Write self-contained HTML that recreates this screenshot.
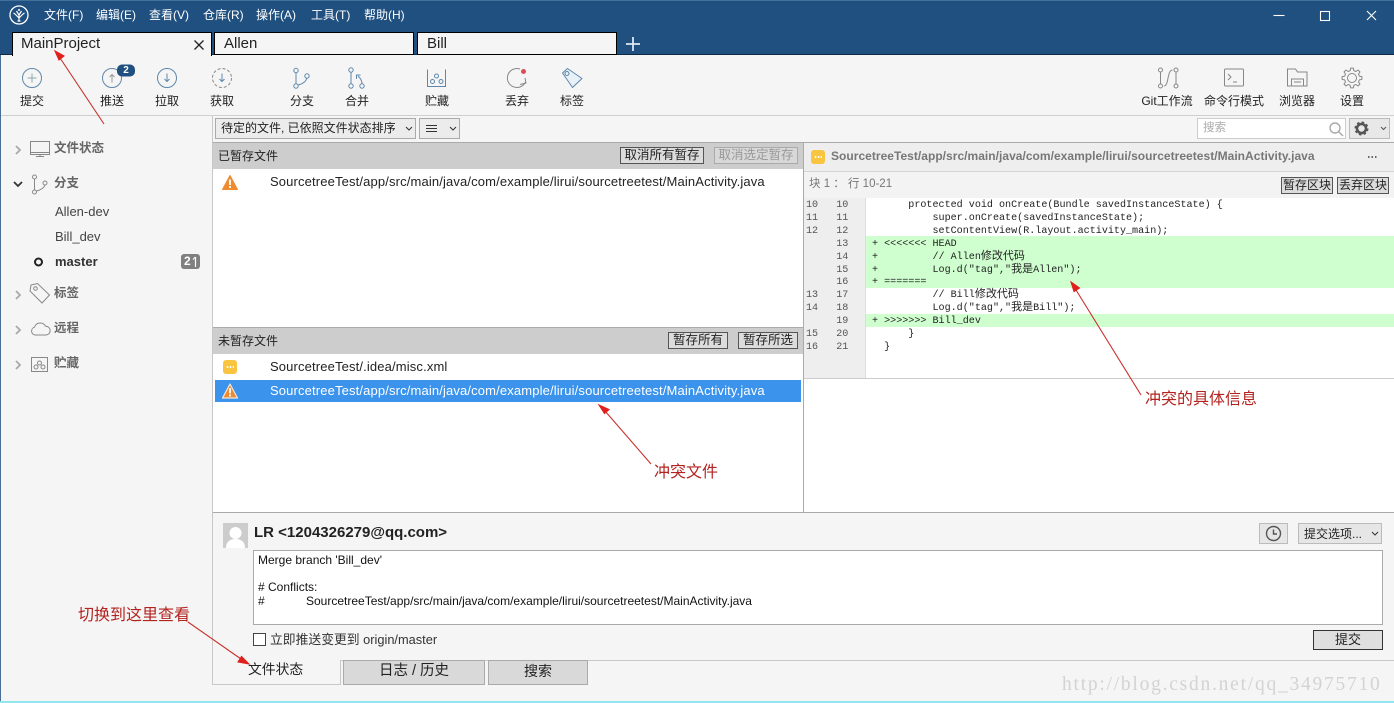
<!DOCTYPE html>
<html><head><meta charset="utf-8">
<style>
html,body{margin:0;padding:0;width:1394px;height:703px;overflow:hidden;background:#f5f5f5;}
body{position:relative;font-family:"Liberation Sans","Noto Sans CJK SC",sans-serif;font-size:12px;color:#222;}
.a{position:absolute;white-space:pre;}
.b{position:absolute;box-sizing:border-box;}
.m{position:absolute;color:#fff;top:7px;line-height:17px;font-size:12px;white-space:pre;}
.t{position:absolute;top:93px;line-height:17px;width:80px;text-align:center;font-size:12px;color:#222;white-space:pre;}
.tab{position:absolute;top:32px;height:23px;background:#f5f5f5;border:1px solid #000;box-sizing:border-box;font-size:15px;line-height:18px;padding:2px 0 0 9px;color:#222;}
.s{position:absolute;left:54px;font-weight:bold;color:#666;font-size:12.5px;line-height:17px;white-space:pre;}
.bn{position:absolute;left:55px;font-size:13px;color:#444;line-height:17px;white-space:pre;}
.h{position:absolute;font-size:12px;line-height:17px;color:#222;white-space:pre;}
.btn{position:absolute;box-sizing:border-box;height:17px;border:1px solid #555;background:#dcdcdc;font-size:12.5px;line-height:15px;text-align:center;color:#222;white-space:pre;}
.p{position:absolute;left:270px;font-size:13px;line-height:17px;color:#222;white-space:pre;letter-spacing:.14px;}
.c{position:absolute;left:872px;font-family:"Liberation Mono","Noto Sans CJK SC",monospace;font-size:10.08px;line-height:13px;color:#222;white-space:pre;}
.c i{font-style:normal;font-size:11px;line-height:0;font-family:"Noto Sans CJK SC",sans-serif;}
.n{position:absolute;font-family:"Liberation Mono",monospace;font-size:10.08px;line-height:13px;color:#555;white-space:pre;}
.r{position:absolute;color:#b3231f;font-size:16px;line-height:20px;white-space:pre;}
svg{position:absolute;overflow:visible;}
</style></head><body>

<!-- title bar -->
<div class="b" style="left:0;top:0;width:1394px;height:55px;background:#205080;border-top:1px solid #44709c;border-bottom:1px solid #0f2a45;"></div>
<svg style="left:9px;top:5px" width="20" height="20" viewBox="0 0 20 20" fill="none" stroke="#fff"><circle cx="10" cy="10" r="9" stroke-width="1.3"/><path d="M10 16V9M10 13L6 9M10 13l4-4M10 10L7.5 6M10 10l2.5-4M6 9L4.5 8M14 9l1.5-1M8.5 16h3" stroke-width="1.2"/><circle cx="10" cy="5" r="1" fill="#fff" stroke="none"/></svg>
<div class="m" style="left:44px">文件(F)</div>
<div class="m" style="left:96px">编辑(E)</div>
<div class="m" style="left:149px">查看(V)</div>
<div class="m" style="left:203px">仓库(R)</div>
<div class="m" style="left:256px">操作(A)</div>
<div class="m" style="left:311px">工具(T)</div>
<div class="m" style="left:364px">帮助(H)</div>
<svg style="left:1270px;top:8px" width="114" height="16" viewBox="0 0 114 16" fill="none" stroke="#fff" stroke-width="1.1"><path d="M3.500 7.500h11"/><rect x="50.5" y="3.500" width="9" height="9"/><path d="M97 3l9 9M106 3l-9 9"/></svg>

<!-- tabs -->
<div class="tab" style="left:12px;width:200px;height:24px;border-bottom:0;padding-left:8px;z-index:1">MainProject</div>
<svg style="left:193px;top:39px;z-index:2" width="12" height="12" fill="none" stroke="#222" stroke-width="1.300"><path d="M1.500 1.500l9 9M10.500 1.500l-9 9"/></svg>
<div class="tab" style="left:214px;width:200px;">Allen</div>
<div class="tab" style="left:417px;width:200px;">Bill</div>
<svg style="left:626px;top:37px" width="14" height="14" fill="none" stroke="#dfe8f2" stroke-width="1.800"><path d="M7 0v14M0 7h14"/></svg>

<!-- toolbar -->
<div class="b" style="left:0;top:55px;width:1394px;height:61px;background:#f5f5f5;border-bottom:1px solid #cfcfcf;"></div>
<svg style="left:0;top:55px" width="1394" height="50" fill="none" stroke="#5f87ab" stroke-width="1">
 <circle cx="32" cy="23" r="9.500"/><path d="M32 18.500v9M27.500 23h9" stroke="#8aa"/>
 <circle cx="112" cy="23" r="9.500"/><path d="M112 27.500v-8M109.500 22l2.500-2.500 2.500 2.500" stroke="#999"/>
 <rect x="117" y="9.500" width="18" height="12" rx="5" fill="#205080" stroke="none"/>
 <circle cx="167" cy="23" r="9.500"/><path d="M167 18.500v8M164.500 24l2.500 2.500 2.500-2.500"/>
 <circle cx="222" cy="23" r="9.500" stroke-dasharray="3 2" stroke="#888"/><path d="M222 18.500v8M219.500 24l2.500 2.500 2.500-2.500"/>
 <circle cx="296" cy="15.500" r="2.200"/><circle cx="296" cy="31" r="2.200"/><circle cx="307" cy="21" r="2.200"/><path d="M296 18v11M298 30c5-1 8-4 9-7"/>
 <circle cx="351" cy="15" r="2.200"/><circle cx="351" cy="31" r="2.200"/><circle cx="362" cy="31" r="2.200"/><path d="M351 17.500v11M362 29c0-4-2-6-4-8M356.500 24v-4h4"/>
 <path d="M427.500 14.500v17h18v-17"/><circle cx="432.500" cy="26.500" r="2"/><circle cx="436.500" cy="21" r="2"/><circle cx="441" cy="26.500" r="2"/>
 <path d="M520 14a9.500 9.500 0 1 0 5.500 13M520 29.500l6-1.500-1-5" stroke="#888"/><circle cx="523.500" cy="16.500" r="2.500" fill="#dd4d55" stroke="none"/>
 <path d="M562.500 18l5-4.500 14.500 10-9.500 9z" fill="#e8f1f8" stroke-linejoin="round"/><circle cx="567" cy="18.500" r="2"/>
 <g stroke="#888"><circle cx="1160.500" cy="15" r="2"/><circle cx="1160.500" cy="31" r="2"/><circle cx="1176" cy="15" r="2"/><circle cx="1176" cy="31" r="2"/><path d="M1160.500 17v12M1176 17v12M1164 31c5 0 3-16 8.500-16"/>
 <rect x="1224.500" y="14" width="19" height="17" rx="1"/><path d="M1228 19l3 3-3 3M1233 27h4"/>
 <path d="M1287.500 31V14h8l2 3h9.500v14zM1291.500 31v-7h12v7M1294 27h7"/>
 <polygon transform="translate(1352 23)" stroke-linejoin="round" points="7.37,1.84 9.9,1.39 9.9,-1.39 7.37,-1.84 6.51,-3.91 7.99,-6.02 6.02,-7.99 3.91,-6.51 1.84,-7.37 1.39,-9.9 -1.39,-9.9 -1.84,-7.37 -3.91,-6.51 -6.02,-7.99 -7.99,-6.02 -6.51,-3.91 -7.37,-1.84 -9.9,-1.39 -9.9,1.39 -7.37,1.84 -6.51,3.91 -7.99,6.02 -6.02,7.99 -3.91,6.51 -1.84,7.37 -1.39,9.9 1.39,9.9 1.84,7.37 3.91,6.51 6.02,7.99 7.99,6.02 6.51,3.91"/><circle cx="1352" cy="23" r="4.500"/></g>
</svg>
<div class="a" style="left:117px;top:63.500px;width:18px;text-align:center;color:#fff;font-weight:bold;font-size:10px;line-height:13px;">2</div>
<div class="t" style="left:-8px">提交</div>
<div class="t" style="left:72px">推送</div>
<div class="t" style="left:127px">拉取</div>
<div class="t" style="left:182px">获取</div>
<div class="t" style="left:262px">分支</div>
<div class="t" style="left:317px">合并</div>
<div class="t" style="left:397px">贮藏</div>
<div class="t" style="left:477px">丢弃</div>
<div class="t" style="left:532px">标签</div>
<div class="t" style="left:1127px">Git工作流</div>
<div class="t" style="left:1194px">命令行模式</div>
<div class="t" style="left:1257px">浏览器</div>
<div class="t" style="left:1312px">设置</div>

<!-- left window edge -->
<div class="b" style="left:0;top:55px;width:1px;height:648px;background:#4a6f94;"></div>

<!-- sidebar -->
<div class="b" style="left:212px;top:116px;width:1px;height:569px;background:#c8c8c8;"></div>
<svg style="left:0;top:130px" width="212" height="250" fill="none" stroke="#888" stroke-width="1">
 <g stroke="#aaa" stroke-width="1.800"><path d="M16 16l4 4-4 4"/><path d="M16 161l4 4-4 4"/><path d="M16 196l4 4-4 4"/><path d="M16 231l4 4-4 4"/></g>
 <path d="M14 52l4 4 4-4" stroke="#333" stroke-width="1.800"/>
 <rect x="30.500" y="11.500" width="19" height="13" /><path d="M30.500 22.500h19M36 26.500h8M40 25v2"/>
 <circle cx="34.500" cy="47" r="2"/><circle cx="34.500" cy="62" r="2"/><circle cx="45" cy="53" r="2"/><path d="M34.500 49v11M36.500 61c5-1 8-4 8.500-6"/>
 <circle cx="38.500" cy="132" r="3.500" stroke="#222" stroke-width="2"/>
 <path d="M31 155l6.500-1.500 12 11.500-7.500 8-12-12z"/><circle cx="35.500" cy="158.500" r="1.800"/>
 <path d="M35 205a4 4 0 0 1-.5-7.800a6 6 0 0 1 11-1a4.400 4.400 0 0 1 .5 8.800z"/>
 <rect x="31.500" y="227.500" width="16" height="14"/><circle cx="36" cy="237" r="2"/><circle cx="39.500" cy="233" r="2"/><circle cx="43" cy="237" r="2"/>
</svg>
<div class="s" style="top:140px">文件状态</div>
<div class="s" style="top:175px">分支</div>
<div class="s" style="top:285px">标签</div>
<div class="s" style="top:320px">远程</div>
<div class="s" style="top:355px">贮藏</div>
<div class="bn" style="top:203px">Allen-dev</div>
<div class="bn" style="top:228px">Bill_dev</div>
<div class="bn" style="top:253px;font-weight:bold;color:#333">master</div>
<div class="b" style="left:181px;top:254px;width:19px;height:15px;background:#808080;border-radius:3px;color:#fff;font-weight:bold;font-size:12px;line-height:15px;padding-left:3px;">2</div>
<svg style="left:192px;top:256px" width="7" height="11" fill="none" stroke="#fff" stroke-width="1.200"><path d="M3.500 11V1M1 3.500L3.500 1"/></svg>

<!-- filter row -->
<div class="b" style="left:215px;top:118px;width:201px;height:21px;background:#ececec;border:1px solid #aaa;font-size:12px;line-height:19px;padding-left:5px;color:#222;white-space:pre;">待定的文件, 已依照文件状态排序</div>
<svg style="left:405px;top:126px" width="8" height="6" fill="none" stroke="#333"><path d="M1 1l3 3 3-3"/></svg>
<div class="b" style="left:419px;top:118px;width:41px;height:21px;background:#ececec;border:1px solid #aaa;"></div>
<svg style="left:426px;top:124px" width="30" height="10" fill="none" stroke="#333"><path d="M0 1.500h11M0 4.500h11M0 7.500h11M24 3l3 3 3-3"/></svg>
<div class="b" style="left:1197px;top:118px;width:149px;height:21px;background:#fff;border:1px solid #ccc;color:#aaa;font-size:11.500px;line-height:19px;padding-left:5px;">搜索</div>
<svg style="left:1328px;top:121px" width="16" height="16" fill="none" stroke="#aaa" stroke-width="1.400"><circle cx="7" cy="7" r="5"/><path d="M10.500 10.500l4.500 4.500"/></svg>
<div class="b" style="left:1349px;top:118px;width:41px;height:21px;background:#e8e8e8;border:1px solid #bbb;"></div>
<svg style="left:1354px;top:121px" width="34" height="15" fill="none"><circle cx="7.500" cy="7.500" r="4.500" stroke="#555" stroke-width="2.500"/><circle cx="7.500" cy="7.500" r="6" stroke="#555" stroke-width="2" stroke-dasharray="2.500 2.200"/><path d="M27 6l2.500 2.500L32 6" stroke="#555"/></svg>

<!-- left panels -->
<div class="b" style="left:213px;top:142px;width:591px;height:371px;background:#fff;"></div>
<div class="b" style="left:213px;top:142px;width:590px;height:27px;background:#cdcdcd;border-top:1px solid #aaa;"></div>
<div class="h" style="left:218px;top:148px">已暂存文件</div>
<div class="btn" style="left:620px;top:147px;width:84px;">取消所有暂存</div>
<div class="btn" style="left:714px;top:147px;width:84px;border-color:#aaa;background:#d8d8d8;color:#999;">取消选定暂存</div>
<svg style="left:222px;top:175px" width="16" height="15"><path d="M8 .5L15.500 14.500H.5z" fill="#ee8a2f" stroke="#ee8a2f" stroke-linejoin="round"/><path d="M8 4.500v5.500M8 11v2" stroke="#fff" stroke-width="1.800"/></svg>
<div class="p" style="top:173px">SourcetreeTest/app/src/main/java/com/example/lirui/sourcetreetest/MainActivity.java</div>

<div class="b" style="left:213px;top:327px;width:590px;height:27px;background:#cdcdcd;border-top:1px solid #aaa;"></div>
<div class="h" style="left:218px;top:333px">未暂存文件</div>
<div class="btn" style="left:668px;top:332px;width:60px;">暂存所有</div>
<div class="btn" style="left:738px;top:332px;width:60px;">暂存所选</div>
<div class="b" style="left:223px;top:360px;width:14px;height:14px;background:#f9c440;border-radius:3px;"></div>
<div class="a" style="left:226px;top:366px;width:8px;height:2px;background:radial-gradient(circle,#fff 1px,transparent 1px) 0 0/3px 2px;"></div>
<div class="p" style="top:358px">SourcetreeTest/.idea/misc.xml</div>
<div class="b" style="left:215px;top:380px;width:586px;height:22px;background:#3b93ec;"></div>
<svg style="left:222px;top:383px" width="16" height="16"><path d="M8 1L15.500 15H.5z" fill="#ee8a2f" stroke="#f6e6d8" stroke-width="1.200" stroke-linejoin="round"/><path d="M8 5v5.500M8 11.500v2" stroke="#fff" stroke-width="1.800"/></svg>
<div class="p" style="top:382px;color:#fff">SourcetreeTest/app/src/main/java/com/example/lirui/sourcetreetest/MainActivity.java</div>

<!-- right panel -->
<div class="b" style="left:803px;top:142px;width:1px;height:371px;background:#aaa;"></div>
<div class="b" style="left:804px;top:142px;width:590px;height:371px;background:#fff;"></div>
<div class="b" style="left:804px;top:142px;width:590px;height:30px;background:#eee;border-top:1px solid #aaa;border-bottom:1px solid #d5d5d5;"></div>
<div class="b" style="left:811px;top:150px;width:14px;height:14px;background:#f9c440;border-radius:3px;"></div>
<div class="a" style="left:814px;top:156px;width:8px;height:2px;background:radial-gradient(circle,#fff 1px,transparent 1px) 0 0/3px 2px;"></div>
<div class="a" style="left:831px;top:148px;font-size:12px;line-height:17px;font-weight:bold;color:#777;letter-spacing:.03px;">SourcetreeTest/app/src/main/java/com/example/lirui/sourcetreetest/MainActivity.java</div>
<div class="a" style="left:1367px;top:156px;width:10px;height:2px;background:radial-gradient(circle,#666 1px,transparent 1px) 0 0/3.500px 2px;"></div>
<div class="b" style="left:804px;top:172px;width:590px;height:26px;background:#f3f3f3;"></div>
<div class="a" style="left:809px;top:176px;color:#777;font-size:11.500px;line-height:17px;">块 1 ： 行 10-21</div>
<div class="btn" style="left:1281px;top:177px;width:52px;font-size:12px;">暂存区块</div>
<div class="btn" style="left:1337px;top:177px;width:52px;font-size:12px;">丢弃区块</div>

<div class="b" style="left:804px;top:198px;width:62px;height:180px;background:#eee;"></div>
<div class="b" style="left:865px;top:198px;width:1px;height:180px;background:#ddd;"></div>
<div class="b" style="left:866px;top:236px;width:528px;height:52px;background:#cfffcf;"></div>
<div class="b" style="left:866px;top:314px;width:528px;height:13px;background:#cfffcf;"></div>
<div class="b" style="left:804px;top:378px;width:590px;height:1px;background:#ccc;"></div>

<div class="n" style="left:806px;top:199px">10   10</div>
<div class="n" style="left:806px;top:212px">11   11</div>
<div class="n" style="left:806px;top:225px">12   12</div>
<div class="n" style="left:806px;top:238px">     13</div>
<div class="n" style="left:806px;top:251px">     14</div>
<div class="n" style="left:806px;top:264px">     15</div>
<div class="n" style="left:806px;top:276px">     16</div>
<div class="n" style="left:806px;top:289px">13   17</div>
<div class="n" style="left:806px;top:302px">14   18</div>
<div class="n" style="left:806px;top:315px">     19</div>
<div class="n" style="left:806px;top:328px">15   20</div>
<div class="n" style="left:806px;top:341px">16   21</div>

<div class="c" style="top:199px">      protected void onCreate(Bundle savedInstanceState) {</div>
<div class="c" style="top:212px">          super.onCreate(savedInstanceState);</div>
<div class="c" style="top:225px">          setContentView(R.layout.activity_main);</div>
<div class="c" style="top:238px">+ &lt;&lt;&lt;&lt;&lt;&lt;&lt; HEAD</div>
<div class="c" style="top:251px">+         // Allen<i>修改代码</i></div>
<div class="c" style="top:264px">+         Log.d("tag","<i>我是</i>Allen");</div>
<div class="c" style="top:276px">+ =======</div>
<div class="c" style="top:289px">          // Bill<i>修改代码</i></div>
<div class="c" style="top:302px">          Log.d("tag","<i>我是</i>Bill");</div>
<div class="c" style="top:315px">+ &gt;&gt;&gt;&gt;&gt;&gt;&gt; Bill_dev</div>
<div class="c" style="top:328px">      }</div>
<div class="c" style="top:341px">  }</div>

<!-- commit area -->
<div class="b" style="left:213px;top:512px;width:1181px;height:1px;background:#aaa;"></div>
<div class="b" style="left:223px;top:523px;width:25px;height:25px;background:#ccc;overflow:hidden;"><svg width="25" height="25"><circle cx="12.500" cy="10" r="6" fill="#fff"/><path d="M3 25c0-7 5-9 9.500-9s9.500 2 9.500 9z" fill="#fff"/></svg></div>
<div class="a" style="left:254px;top:524px;font-size:15px;font-weight:bold;line-height:18px;color:#222;">LR &lt;1204326279@qq.com&gt;</div>
<div class="b" style="left:1259px;top:523px;width:29px;height:21px;background:#e6e6e6;border:1px solid #bbb;"></div>
<svg style="left:1265px;top:525px" width="17" height="17" fill="none" stroke="#555" stroke-width="1.400"><circle cx="8.500" cy="8.500" r="7"/><path d="M8.500 4.500v4.500h3.500"/></svg>
<div class="b" style="left:1298px;top:523px;width:84px;height:21px;background:#e6e6e6;border:1px solid #bbb;font-size:12px;line-height:20px;padding-left:5px;color:#222;white-space:pre;">提交选项...</div>
<svg style="left:1371px;top:531px" width="8" height="6" fill="none" stroke="#333"><path d="M1 1l3 3 3-3"/></svg>
<div class="b" style="left:253px;top:550px;width:1130px;height:75px;background:#fff;border:1px solid #aaa;"></div>
<div class="a" style="left:258px;top:554px;font-size:12px;line-height:13.500px;color:#111;">Merge branch 'Bill_dev'

# Conflicts:
#</div>
<div class="a" style="left:306px;top:594px;font-size:12px;line-height:14px;color:#111;">SourcetreeTest/app/src/main/java/com/example/lirui/sourcetreetest/MainActivity.java</div>
<div class="b" style="left:253px;top:633px;width:13px;height:13px;background:#fff;border:1px solid #444;"></div>
<div class="a" style="left:270px;top:631px;font-size:12.800px;line-height:17px;color:#333;">立即推送变更到 origin/master</div>
<div class="b" style="left:1313px;top:630px;width:70px;height:20px;background:#dfdfdf;border:1px solid #333;font-size:13px;line-height:18px;text-align:center;">提交</div>

<!-- bottom tabs -->
<div class="b" style="left:213px;top:660px;width:1181px;height:1px;background:#c8c8c8;"></div>
<div class="b" style="left:213px;top:684px;width:128px;height:1px;background:#c8c8c8;"></div>
<div class="b" style="left:340px;top:660px;width:1px;height:25px;background:#c8c8c8;"></div>
<div class="b" style="left:213px;top:660px;width:127px;height:24px;background:#f5f5f5;"></div>
<div class="a" style="left:248px;top:661px;font-size:13.800px;line-height:18px;color:#222;">文件状态</div>
<div class="b" style="left:343px;top:660px;width:142px;height:25px;background:#d9d9d9;border:1px solid #aaa;font-size:14.500px;line-height:21px;text-align:center;color:#222;">日志 / 历史</div>
<div class="b" style="left:488px;top:660px;width:100px;height:25px;background:#d9d9d9;border:1px solid #aaa;font-size:14px;line-height:21px;text-align:center;color:#222;">搜索</div>

<!-- watermark -->
<div class="a" style="left:1062px;top:674px;font-family:'Liberation Serif',serif;font-size:19.500px;line-height:22px;letter-spacing:1.760px;color:#d3d3d3;">http://blog.csdn.net/qq_34975710</div>
<div class="b" style="left:0;top:701px;width:1394px;height:2px;background:#8fe8ee;"></div>

<!-- annotations -->
<svg style="left:0;top:0;z-index:3" width="1394" height="703" fill="none" stroke="#c8302a" stroke-width="1.100">
 <path d="M104 124L60 58"/><path d="M55 51l9 5-5 4z" fill="#e0201c" stroke="#e0201c"/>
 <path d="M651 464L605 411"/><path d="M599 405l10 4.500-4.500 4z" fill="#e0201c" stroke="#e0201c"/>
 <path d="M1141 395L1076 290"/><path d="M1071 282l8.500 6-5.500 3.500z" fill="#e0201c" stroke="#e0201c"/>
 <path d="M188 622L241 659"/><path d="M249 664l-11-2 3.500-5.500z" fill="#e0201c" stroke="#e0201c"/>
</svg>
<div class="r" style="left:654px;top:463px">冲突文件</div>
<div class="r" style="left:1145px;top:390px">冲突的具体信息</div>
<div class="r" style="left:78px;top:606px">切换到这里查看</div>
</body></html>
